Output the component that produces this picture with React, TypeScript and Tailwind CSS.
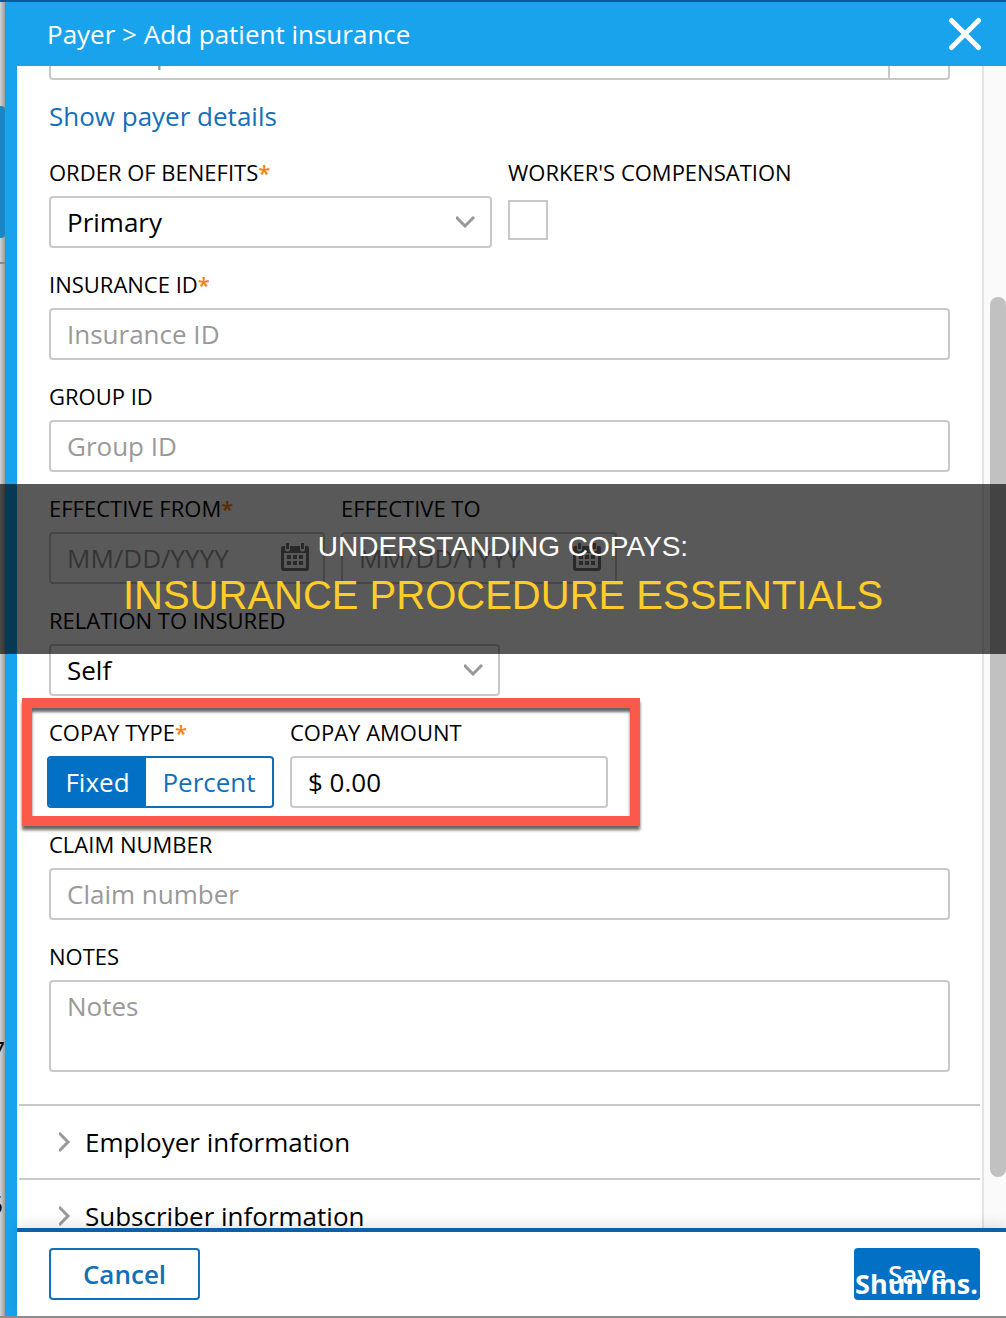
import { useState } from "react";
import type { ReactNode } from "react";
import clsx from "clsx";

const inputClass =
  "block h-13 w-full rounded-sm border-2 border-[#c9c9c9] bg-white px-4 text-[26px] text-black placeholder:text-[#999] outline-none";

const App = () => (
  <div className="relative flex h-screen flex-col overflow-hidden border-t-2 border-b-2 border-t-[#0b56a0] border-b-[#8c8c8c] bg-white font-['Open_Sans','Noto_Sans',sans-serif] text-black">
    <div className="flex min-h-0 grow">
      <PageEdge />

      <main className="flex min-w-0 grow flex-col border-l-12 border-[#18a3ec]">
        <Header />
        <div className="flex min-h-0 grow">
          <Form />
          <Scrollbar />
        </div>
        <Footer />
      </main>
    </div>

    <Banner />
  </div>
);

export default App;

const PageEdge = () => (
  <div className="relative w-[5px] shrink-0 overflow-hidden bg-linear-to-r from-[#d4d4d4] to-[#9c9c9c]">
    <div className="mt-26 h-33 rounded-r-sm bg-[#1a86c4]" />
    <div className="mt-6 h-[2px] bg-[#888]" />
    <span className="absolute top-[1032px] right-0 text-[26px] leading-8">
      7
    </span>
    <span className="absolute top-[1186px] right-[2px] text-[26px] leading-8">
      5
    </span>
  </div>
);

const Header = () => (
  <header className="-ml-3 flex h-16 shrink-0 items-center justify-between bg-[#18a3ec] pr-6 pl-[42px] text-white">
    <h1 className="text-[26px]">Payer &gt; Add patient insurance</h1>
    <button type="button" aria-label="Close">
      <svg
        className="size-[34px]"
        viewBox="0 0 34 34"
        fill="none"
        stroke="currentColor"
        strokeWidth="5"
        strokeLinecap="round"
      >
        <path d="M3.5 3.5 30.5 30.5M30.5 3.5 3.5 30.5" />
      </svg>
    </button>
  </header>
);

const Form = () => (
  <form className="min-w-0 grow overflow-hidden">
    <div className="flex flex-col gap-5 pr-8 pl-8">
      <div className="pb-1">
        <PayerSearch />
        <a
          href="#payer-details"
          className="mt-5 block text-[26px] leading-8 text-[#136fb8]"
        >
          Show payer details
        </a>
      </div>

      <div className="flex gap-4">
        <Field id="order" label="Order of benefits" required>
          <Select id="order" options={["Primary", "Secondary"]} width="w-[443px]" />
        </Field>
        <Field id="workers" label="Worker's compensation">
          <input
            id="workers"
            type="checkbox"
            className="mt-3 block size-10 appearance-none border-2 border-[#c9c9c9] bg-white"
          />
        </Field>
      </div>

      <Field id="insurance-id" label="Insurance ID" required>
        <input id="insurance-id" placeholder="Insurance ID" className={inputClass} />
      </Field>

      <Field id="group-id" label="Group ID">
        <input id="group-id" placeholder="Group ID" className={inputClass} />
      </Field>

      <div className="flex gap-4">
        <Field id="from" label="Effective from" required>
          <DateInput id="from" />
        </Field>
        <Field id="to" label="Effective to">
          <DateInput id="to" />
        </Field>
      </div>

      <Field id="relation" label="Relation to insured">
        <Select id="relation" options={["Self", "Spouse", "Child"]} width="w-[451px]" />
      </Field>

      <Copay />

      <Field id="claim" label="Claim number">
        <input id="claim" placeholder="Claim number" className={inputClass} />
      </Field>

      <Field id="notes" label="Notes">
        <textarea
          id="notes"
          placeholder="Notes"
          className="block h-23 w-full resize-none rounded-sm border-2 border-[#c9c9c9] px-4 py-2 text-[26px] leading-8 outline-none placeholder:text-[#999]"
        />
      </Field>
    </div>

    <div className="mt-8 mr-[2px] ml-[2px]">
      <Section title="Employer information" />
      <Section title="Subscriber information" />
    </div>
  </form>
);

const PayerSearch = () => (
  <div className="flex h-[14px] items-end overflow-hidden">
    <input
      aria-label="Payer"
      placeholder="Search plan"
      className="h-13 min-w-0 grow rounded-bl-sm border-2 border-[#c9c9c9] px-4 text-[26px] outline-none placeholder:text-[#999]"
    />
    <button
      type="button"
      aria-label="Search payer"
      className="h-13 w-15 rounded-br-sm border-2 border-l-0 border-[#c9c9c9]"
    />
  </div>
);

const Required = () => (
  <span className="font-semibold text-[#f5820f]">*</span>
);

const Field = ({
  id,
  label,
  required,
  children,
}: {
  id: string;
  label: string;
  required?: boolean;
  children: ReactNode;
}) => (
  <div>
    <label htmlFor={id} className="mb-2 block text-[22px] leading-8 uppercase">
      {label}
      {required && <Required />}
    </label>
    {children}
  </div>
);

const Select = ({
  id,
  options,
  width,
}: {
  id: string;
  options: string[];
  width: string;
}) => (
  <div className={clsx("relative", width)}>
    <select id={id} className={clsx(inputClass, "appearance-none")}>
      {options.map((option) => (
        <option key={option}>{option}</option>
      ))}
    </select>
    <svg
      className="pointer-events-none absolute top-5 right-4 h-3 w-5"
      viewBox="0 0 20 12"
      fill="none"
      stroke="#999"
      strokeWidth="3"
    >
      <path d="M0 1 9 10 18 1" />
    </svg>
  </div>
);

const DateInput = ({ id }: { id: string }) => (
  <div className="relative w-[276px]">
    <input id={id} placeholder="MM/DD/YYYY" className={inputClass} />
    <svg
      className="absolute top-[11px] right-4 h-7 w-7"
      viewBox="0 0 28 28"
      fill="#777"
    >
      <path
        fillRule="evenodd"
        d="M2 3h2v3a2 2 0 0 0 5 0V3h10v3a2 2 0 0 0 5 0V3h2a2 2 0 0 1 2 2v20a3 3 0 0 1-3 3H3a3 3 0 0 1-3-3V5a2 2 0 0 1 2-2ZM3 10v14a1 1 0 0 0 1 1h20a1 1 0 0 0 1-1V10Z"
      />
      <path d="M5 0h3v6H5zM20 0h3v6h-3zM6 12h4v4H6zM12 12h4v4h-4zM18 12h4v4h-4zM6 18h4v4H6zM12 18h4v4h-4zM18 18h4v4h-4z" />
    </svg>
  </div>
);

const Copay = () => {
  const [type, setType] = useState("Fixed");

  return (
    <div className="relative flex gap-4">
      <fieldset className="-ml-[2px]">
        <legend className="mb-2 pl-[2px] text-[22px] leading-8 uppercase">
          Copay type
          <Required />
        </legend>
        <div className="flex h-13 w-[227px] overflow-hidden rounded-sm border-2 border-[#0f6cb6] text-[26px]">
          {["Fixed", "Percent"].map((option) => (
            <button
              key={option}
              type="button"
              aria-pressed={type === option}
              onClick={() => setType(option)}
              className={clsx(
                "grow px-4",
                type === option ? "bg-[#0271c5] text-white" : "text-[#136fb8]",
              )}
            >
              {option}
            </button>
          ))}
        </div>
      </fieldset>

      <div className="w-[318px]">
        <Field id="amount" label="Copay amount">
          <input id="amount" defaultValue="$ 0.00" className={inputClass} />
        </Field>
      </div>

      <div className="pointer-events-none absolute -top-[18px] -left-[27px] h-32 w-[618px] border-10 border-[#fb5a4b] shadow-[0_4px_3px_#666,inset_0_4px_3px_#666]" />
    </div>
  );
};

const Section = ({ title }: { title: string }) => (
  <button
    type="button"
    className="flex h-[74px] w-full items-center gap-[14px] border-t-2 border-[#c9c9c9] pl-10 text-left text-[26px]"
  >
    <svg
      className="h-5 w-3"
      viewBox="0 0 12 20"
      fill="none"
      stroke="#999"
      strokeWidth="3"
    >
      <path d="M0 1 9 10 0 19" />
    </svg>
    {title}
  </button>
);

const Scrollbar = () => (
  <div className="w-6 shrink-0 border-l-2 border-[#e4e4e4] bg-[#fafafa]">
    <div className="mt-[231px] ml-[6px] h-[880px] w-4 rounded-full bg-[#c1c1c1]" />
  </div>
);

const Footer = () => (
  <footer className="relative flex h-22 shrink-0 items-center justify-between border-t-4 border-[#0f5ea8] bg-white pr-[26px] pl-8 text-[26px] font-semibold shadow-[0_-4px_12px_#0000001a]">
    <button
      type="button"
      className="h-13 w-[151px] rounded-sm border-2 border-[#136fb8] text-[#136fb8]"
    >
      Cancel
    </button>
    <button
      type="button"
      className="h-13 w-[126px] rounded-sm bg-[#0271c5] text-white"
    >
      Save
    </button>
    <span className="absolute right-7 bottom-4 text-[27px] leading-8 font-bold text-white">
      Shun Ins.
    </span>
  </footer>
);

const Banner = () => (
  <div className="absolute inset-x-0 top-[482px] flex h-[170px] flex-col items-center justify-center bg-black/65 pt-3 font-['Liberation_Sans',sans-serif]">
    <p className="text-[28px] leading-10 text-white">UNDERSTANDING COPAYS:</p>
    <p className="text-[40px] leading-14 text-[#ffcc29]">
      INSURANCE PROCEDURE ESSENTIALS
    </p>
  </div>
);
